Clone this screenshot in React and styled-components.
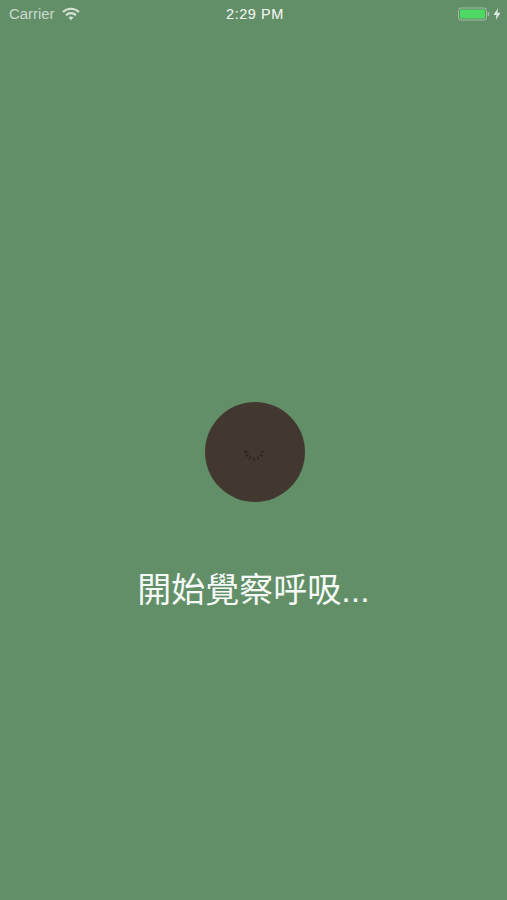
import styled, { createGlobalStyle } from "styled-components";

const Global = createGlobalStyle`
  html, body {
    margin: 0;
    padding: 0;
    background: #628f68;
  }
`;

const Screen = styled.div`
  width: 507px;
  height: 900px;
  overflow: hidden;
  background: #628f68;
  display: flex;
  flex-direction: column;
  align-items: center;
  font-family: "Liberation Sans", Arial, sans-serif;
`;

const StatusBar = styled.div`
  width: 100%;
  height: 27px;
  box-sizing: border-box;
  padding: 0 6px 0 9px;
  display: grid;
  grid-template-columns: 1fr auto 1fr;
  align-items: center;
  color: rgba(255, 255, 255, 0.68);
  font-size: 14.9px;
`;

const Left = styled.div`
  display: flex;
  align-items: center;
  gap: 7px;
`;

const Clock = styled.div`
  font-size: 14.5px;
  letter-spacing: 0.55px;
  font-weight: 500;
  color: rgba(255, 255, 255, 0.75);
  text-shadow: 0 0 0.5px rgba(255, 255, 255, 0.6);
`;

const Right = styled.div`
  display: flex;
  justify-content: flex-end;
  align-items: center;
  gap: 3px;
`;

const Main = styled.div`
  flex: 1;
  display: flex;
  flex-direction: column;
  align-items: center;
  padding-top: 375px;
`;

const Circle = styled.div`
  width: 100px;
  height: 100px;
  margin-left: 3px;
  border-radius: 50%;
  background: #423830;
  display: flex;
  align-items: center;
  justify-content: center;
`;

const Caption = styled.div`
  margin-top: 66px;
  width: 300px;
  text-align: center;
  color: #f6faf6;
  font-family: "Liberation Sans", "Noto Sans CJK TC", sans-serif;
  font-size: 34px;
  line-height: 44px;
`;

const Wifi = () => (
  <svg width="18" height="14" viewBox="0 0 18 14">
    <path d="M1 5a11.5 11.5 0 0 1 16 0" fill="none" stroke="#d5e3d6" strokeWidth="2.2" />
    <path d="M4 8.2a7.2 7.2 0 0 1 10 0" fill="none" stroke="#d5e3d6" strokeWidth="2.2" />
    <path d="M6.6 10.6a3.4 3.4 0 0 1 4.8 0L9 13.2z" fill="#d5e3d6" />
  </svg>
);

const Battery = () => (
  <svg width="32" height="14" viewBox="0 0 32 14">
    <rect x="0.5" y="1" width="28" height="12" rx="2.5" fill="none" stroke="#a0bda3" />
    <rect x="2" y="2.5" width="25" height="9" rx="1" fill="#4cd964" />
    <rect x="29.6" y="5" width="1.6" height="4" rx="0.8" fill="#a0bda3" />
  </svg>
);

const Bolt = () => (
  <svg width="8" height="12" viewBox="0 0 8 12">
    <path d="M5 0 0.5 7H3.5L2.8 12 7.5 4.8H4.4z" fill="#dfeae0" />
  </svg>
);

const ticks = [95, 122, 150, 180, 210, 238, 265];

const Spinner = () => (
  <svg width="28" height="28" viewBox="-14 -14 28 28">
    {ticks.map((a, i) => (
      <line
        key={a}
        x1="0"
        y1="6.5"
        x2="0"
        y2="10"
        stroke="#251c17"
        strokeWidth="1.6"
        opacity={0.45 + i * 0.05}
        transform={`translate(-1 -1) rotate(${a - 180})`}
      />
    ))}
  </svg>
);

export default function App() {
  return (
    <Screen>
      <Global />
      <StatusBar>
        <Left>
          <span>Carrier</span>
          <Wifi />
        </Left>
        <Clock>2:29 PM</Clock>
        <Right>
          <Battery />
          <Bolt />
        </Right>
      </StatusBar>
      <Main>
        <Circle>
          <Spinner />
        </Circle>
        <Caption>開始覺察呼吸...</Caption>
      </Main>
    </Screen>
  );
}
